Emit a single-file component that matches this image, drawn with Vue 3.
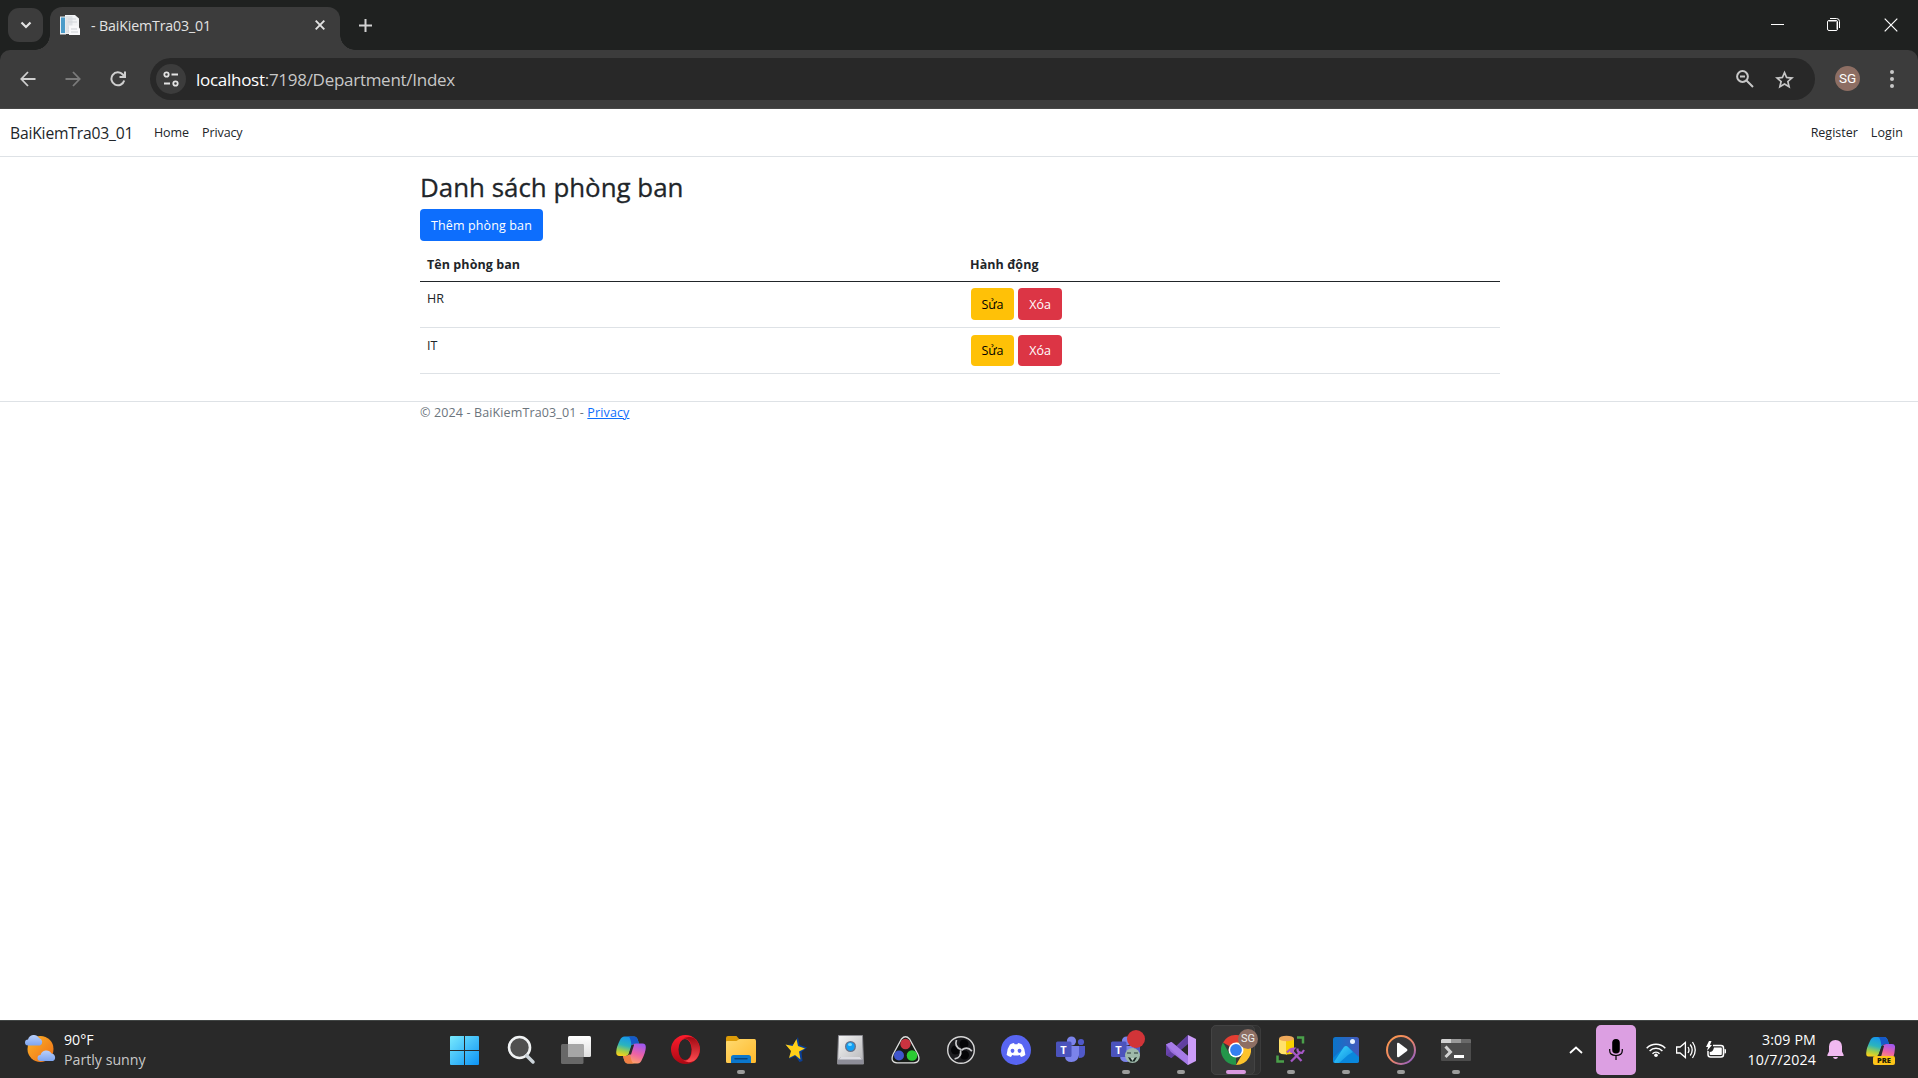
<script setup>
const departments = [
  { name: 'HR' },
  { name: 'IT' },
]
</script>

<template>
  <div class="screen">
    <!-- Browser tab strip -->
    <div class="tabstrip">
      <div class="tabsearch">
        <svg width="12" height="8" viewBox="0 0 12 8"><path d="M1.500 1.500 6 6l4.500-4.500" fill="none" stroke="#e3e3e3" stroke-width="2.200" /></svg>
      </div>
      <div class="tab">
        <svg class="favicon" width="20" height="20" viewBox="0 0 20 20">
          <path d="M0 1.500h6v18H0z" fill="#e9eef2" /><path d="M1 2.500h4v15.500H1z" fill="#4a9bc9" />
          <path d="M5 0h10l4 3.500V19H5z" fill="#f2f3f5" /><path d="M5.500 1h7v17h-7z" fill="#dfe2e6" />
          <path d="M8 4h8M8 7h9M8 13h8M8 16h8" stroke="#d3d6db" />
          <path d="M9 10.500h8l3 3V20H9z" fill="#f8f8fa" /><path d="M11 14h6M11 17h7" stroke="#cdd0d5" />
        </svg>
        <span class="tabtitle">- BaiKiemTra03_01</span>
        <svg class="tabclose" width="10" height="10" viewBox="0 0 10 10"><path d="m.7.7 8.600 8.600M9.300.7.7 9.300" stroke="#e3e3e3" stroke-width="1.900" /></svg>
      </div>
      <svg class="newtab" width="13" height="13" viewBox="0 0 13 13"><path d="M6.500 0v13M0 6.500h13" stroke="#d2d2d2" stroke-width="2" /></svg>
      <div class="wincontrols">
        <svg width="13" height="13" viewBox="0 0 13 13"><path d="M0 6.500h13" stroke="#fff" /></svg>
        <svg width="13" height="13" viewBox="0 0 13 13"><path d="M3 .5h6.500a3 3 0 0 1 3 3V10" fill="none" stroke="#fff" /><rect x=".5" y="2.500" width="10" height="10" rx="1.500" fill="none" stroke="#fff" /><path d="M2 3.500h7.500V11" fill="none" stroke="#8b8b8b" /></svg>
        <svg width="14" height="14" viewBox="0 0 14 14"><path d="m.7.7 12.600 12.600M13.300.7.7 13.300" stroke="#fff" stroke-width="1.200" /></svg>
      </div>
    </div>

    <!-- Toolbar -->
    <div class="toolbar-back">
      <div class="toolbar">
        <svg class="navicon" width="16" height="16" viewBox="0 0 16 16"><path d="M15.500 8H2M8 1 1.300 8 8 15" fill="none" stroke="#cfcfcf" stroke-width="1.800" /></svg>
        <svg class="navicon" width="16" height="16" viewBox="0 0 16 16"><path d="M.5 8H14M8 1l6.700 7L8 15" fill="none" stroke="#7b7b7b" stroke-width="1.800" /></svg>
        <svg class="navicon reload" width="16" height="16" viewBox="0 0 16 16"><path d="M14.200 9.500A6.500 6.500 0 1 1 12.800 3.500L14.500 5.500" fill="none" stroke="#cfcfcf" stroke-width="2" /><path d="M15 .5v5.500H9.500" fill="none" stroke="#cfcfcf" stroke-width="2" /></svg>
        <div class="omnibox">
          <div class="sitechip">
            <svg width="16" height="16" viewBox="0 0 16 16" fill="none" stroke="#e3e3e3" stroke-width="1.800"><circle cx="3.500" cy="3.500" r="2.200" /><path d="M8.500 3.500H15M1 12.500h6" /><circle cx="12.500" cy="12.500" r="2.200" /></svg>
          </div>
          <span class="url"><span class="host">localhost</span>:7198/Department/Index</span>
          <svg class="zoomicon" width="18" height="18" viewBox="0 0 18 18" fill="none" stroke="#c7c7c7" stroke-width="2"><circle cx="6.500" cy="6.500" r="5.400" /><path d="M4 6.500h5M10.500 10.500l6.500 6.500" /></svg>
          <svg class="staricon" width="19" height="19" viewBox="0 0 24 24"><path fill="#c7c7c7" fill-rule="evenodd" d="M24 9.200l-8.600-.7L12 .5 8.600 8.500 0 9.200l6.500 5.700-2 8.600L12 18.900l7.400 4.600-2-8.600zM12 16.400l-4.200 2.500 1.100-4.800-3.700-3.200 4.900-.4L12 6l1.900 4.500 4.900.4-3.700 3.200 1.100 4.800z" /></svg>
        </div>
        <div class="avatar">SG</div>
        <svg class="dots" width="4" height="18" viewBox="0 0 4 18" fill="#c7c7c7"><circle cx="2" cy="2" r="2" /><circle cx="2" cy="9" r="2" /><circle cx="2" cy="16" r="2" /></svg>
      </div>
    </div>

    <!-- Web page -->
    <div class="page">
      <nav class="navbar">
        <a class="brand">BaiKiemTra03_01</a>
        <a class="link home">Home</a>
        <a class="link privacy">Privacy</a>
        <a class="link register">Register</a>
        <a class="link login">Login</a>
      </nav>
      <main class="container">
        <h1>Danh sách phòng ban</h1>
        <a class="btn primary">Thêm phòng ban</a>
        <div class="table">
          <div class="tr head"><div class="th name">Tên phòng ban</div><div class="th">Hành động</div></div>
          <div v-for="d in departments" :key="d.name" class="tr">
            <div class="td name">{{ d.name }}</div>
            <div class="td actions"><a class="btn warning">Sửa</a><a class="btn danger">Xóa</a></div>
          </div>
        </div>
      </main>
      <footer>
        <div class="container foot">© 2024 - BaiKiemTra03_01 - <a>Privacy</a></div>
      </footer>
    </div>

    <!-- Taskbar -->
    <div class="taskbar">
      <div class="weather">
        <svg width="31" height="29" viewBox="0 0 31 29">
          <defs>
            <linearGradient id="sun" x1="0" y1="0" x2="1" y2="1"><stop offset="0" stop-color="#fdb529" /><stop offset="1" stop-color="#ee6c15" /></linearGradient>
            <linearGradient id="cloud" x1="0" y1="0" x2="0" y2="1"><stop offset="0" stop-color="#b9cffa" /><stop offset="1" stop-color="#7ea5f0" /></linearGradient>
          </defs>
          <circle cx="15.500" cy="15" r="13" fill="url(#sun)" />
          <path d="M3 11.500a3 3 0 0 1 0-6 6 6 0 0 1 11-1.500 4 4 0 0 1 1 7.500z" fill="url(#cloud)" />
          <path d="M15.500 27a3 3 0 0 1 0-6 6 6 0 0 1 11-1.500 4 4 0 0 1 1.500 7.500z" fill="url(#cloud)" />
        </svg>
        <div class="weathertext"><div class="temp">90°F</div><div class="cond">Partly sunny</div></div>
      </div>

      <div class="apps">
        <div class="app first">
          <svg width="29" height="29" viewBox="0 0 29 29"><defs><linearGradient id="win" x1="0" y1="0" x2="1" y2="1"><stop offset="0" stop-color="#78eafd" /><stop offset="1" stop-color="#0c93f5" /></linearGradient></defs><path fill="url(#win)" d="M1 0h13v14H0V1a1 1 0 0 1 1-1zM15 0h13a1 1 0 0 1 1 1v13H15zM0 15h14v14H1a1 1 0 0 1-1-1zM15 15h14v13a1 1 0 0 1-1 1H15z" /></svg>
        </div>
        <div class="app">
          <svg width="30" height="30" viewBox="0 0 30 30"><circle cx="13.500" cy="12.500" r="10.500" fill="#505050" stroke="#f0f2f3" stroke-width="2.600" /><path d="m20.500 20.500 6.500 6.500" stroke="#ccd4da" stroke-width="3.500" stroke-linecap="round" /></svg>
        </div>
        <div class="app">
          <svg width="30" height="30" viewBox="0 0 30 30"><defs><linearGradient id="tv" x1="0" y1="0" x2="0" y2="1"><stop offset="0" stop-color="#fff" /><stop offset="1" stop-color="#dedede" /></linearGradient></defs><rect x="7" y="1" width="23" height="21" rx="1.500" fill="url(#tv)" /><rect x="0" y="9" width="22.500" height="20" rx="1.500" fill="#686868" /><rect x="7" y="9" width="15.500" height="13" fill="#a6a6a6" /></svg>
        </div>
        <div class="app">
          <svg width="30" height="28" viewBox="0 0 30 28"><defs>
            <linearGradient id="cp1" x1=".5" y1="0" x2=".2" y2="1"><stop offset="0" stop-color="#1594ee" /><stop offset=".45" stop-color="#2bb4bd" /><stop offset=".75" stop-color="#a5ce46" /><stop offset="1" stop-color="#ffd019" /></linearGradient>
            <linearGradient id="cp2" x1=".7" y1="0" x2=".3" y2="1"><stop offset="0" stop-color="#a058ef" /><stop offset=".5" stop-color="#ee62a4" /><stop offset="1" stop-color="#ffab60" /></linearGradient></defs>
            <path d="M8.500.5H18q3 0 4 4l1 3h-3.500q-3 0-4 3L12.700 18q-.9 2-3 2H3.500Q0 20 .2 16 .4 11 4 4 5.500.5 8.500.5z" fill="url(#cp1)" />
            <path d="M12 .5h6q3 0 4 4l1 3h-4q-2.500 0-3.500 2Q14.500.5 12 .5z" fill="#1659c8" />
            <path d="M21.500 27.500H12q-3 0-4-4L7 20h3q3 0 4-3l2.700-7.500q.9-2 3.300-2h6.500q3.500 0 3.300 4-.2 5-3.800 12-1.500 4-4.500 4z" fill="url(#cp2)" />
            <path d="M18 27.500h-6q-3 0-4-4L7 20h3q3 0 4-3 1 10 4 10.500z" fill="#f18044" /><path d="M12.500 18.500 15.500 9h2.500l-3 9.500z" fill="#272a2a" />
          </svg>
        </div>
        <div class="app">
          <svg width="29" height="29" viewBox="0 0 29 29"><defs><linearGradient id="op" x1="0" y1="0" x2="0" y2="1"><stop offset="0" stop-color="#ff1c2d" /><stop offset="1" stop-color="#aa0813" /></linearGradient><linearGradient id="op2" x1="0" y1="0" x2="0" y2="1"><stop offset="0" stop-color="#9f0711" /><stop offset="1" stop-color="#ff4d52" /></linearGradient></defs>
            <circle cx="14.500" cy="14.500" r="14.500" fill="url(#op)" /><path d="M10 5q6-5 13-2a14.500 14.500 0 0 1 0 23q-7 3-13-2 5 4 9-1.500 4-8 0-16-4-5-9-1.500z" fill="url(#op2)" /><ellipse cx="14" cy="14.500" rx="6.500" ry="10.500" fill="#292929" /></svg>
        </div>
        <div class="app">
          <svg width="30" height="27" viewBox="0 0 30 27"><defs><linearGradient id="fold" x1="0" y1="0" x2="1" y2="1"><stop offset="0" stop-color="#ffda70" /><stop offset="1" stop-color="#ffb92b" /></linearGradient></defs><path d="M0 2q0-2 2-2h8.500L14 4h14v6H0z" fill="#dc9b08" /><path d="M0 6q0-1 1-1h9.500l3-2H28.500Q30 3 30 5v20.500q0 1.500-1.500 1.500h-27Q0 27 0 25.500z" fill="url(#fold)" /><path d="M5 27v-5.500Q5 19 7.500 19h15q2.500 0 2.500 2.500V27z" fill="#0b77cc" /><path d="M9 22.800h12" stroke="#06447e" stroke-width="1.500" stroke-linecap="round" /></svg>
          <i class="mark"></i>
        </div>
        <div class="app">
          <svg width="22" height="26" viewBox="0 0 22 26"><path d="m13 0 1.500 8 7.500 2.500-5.500 4.500 1 9-3 1-4-6L4 22l3-8-6-6 8.500-1z" fill="#0b3f96" /><path d="m11.500 2 1.500 7 7 2.500-6 3 1.500 8L10 18l-6 3 2-7L.5 7.500l7 1.500z" fill="#ffcf18" /></svg>
        </div>
        <div class="app">
          <svg width="27" height="30" viewBox="0 0 27 30"><defs><linearGradient id="cam" x1="0" y1="0" x2="1" y2="1"><stop offset="0" stop-color="#f5f5f5" /><stop offset="1" stop-color="#b4b4b7" /></linearGradient></defs><path d="M1.500 .5h24l1 28.500H.5z" fill="url(#cam)" stroke="#8a8a90" /><path d="M1 29v-4l3-3h19l3 3v4z" fill="#8d8d98" /><path d="M2 24.500 4 22h19l2 2.500z" fill="#dcdce2" /><circle cx="13.500" cy="11.500" r="5.500" fill="#66728a" /><circle cx="13.500" cy="11.500" r="4.200" fill="#11a0f5" /><ellipse cx="13" cy="9.500" rx="2" ry="1.500" fill="#7fdcff" /></svg>
        </div>
        <div class="app">
          <svg width="29" height="28" viewBox="0 0 29 28"><path d="M10.500 3Q14.500-1.500 18.500 3L27 18.500Q30 26.300 23 26.800H6Q-1 26.300 2 18.500z" fill="#171b17" stroke="#dedede" stroke-width="1.300" /><circle cx="14.500" cy="8" r="5.200" fill="#ca3340" /><circle cx="8" cy="19.500" r="5" fill="#3f55cc" /><circle cx="21" cy="19.500" r="5.300" fill="#2bcb33" /></svg>
        </div>
        <div class="app">
          <svg width="28" height="28" viewBox="0 0 28 28"><circle cx="14" cy="14" r="13.300" fill="#1d1d20" stroke="#d7d7d7" stroke-width="1.400" /><g fill="#050507"><circle cx="17" cy="8" r="4.500" /><circle cx="8.500" cy="14" r="4.500" /><circle cx="17.500" cy="19" r="4.500" /></g><g fill="none" stroke="#c9c9cb" stroke-width="1.700"><path id="blade" d="M14 13.500Q7 11 9.500 4" /><path transform="rotate(120 14 14)" d="M14 13.500Q7 11 9.500 4" /><path transform="rotate(240 14 14)" d="M14 13.500Q7 11 9.500 4" /></g></svg>
        </div>
        <div class="app">
          <svg width="30" height="30" viewBox="0 0 30 30"><circle cx="15" cy="15" r="15" fill="#5865f2" /><path d="M9 9.500q2-1.200 4-1.400l.6 1.200h2.800l.6-1.200q2 .2 4 1.400 3.500 5 3.300 10.500-2 1.500-4.300 2l-1.200-2q-3.800 1.200-7.600 0l-1.200 2q-2.300-.5-4.300-2Q5.500 14.500 9 9.500z" fill="#fff" /><ellipse cx="11.500" cy="15.800" rx="1.900" ry="2.100" fill="#5865f2" /><ellipse cx="18.500" cy="15.800" rx="1.900" ry="2.100" fill="#5865f2" /></svg>
        </div>
        <div class="app" v-for="n in 2" :key="n">
          <svg width="30" height="27" viewBox="0 0 30 27"><circle cx="25" cy="6" r="3.100" fill="#5059c9" /><path d="M20 10h9v7q0 5-6 5z" fill="#5059c9" /><circle cx="15.500" cy="5" r="4.600" fill="#7b83eb" /><path d="M9 10h14v9q-1 7-7.500 7T9 20z" fill="#7b83eb" /><rect y="5.500" width="15.500" height="15.500" rx="1.500" fill="#4b53bc" /></svg>
          <span class="teamsT">T</span>
          <template v-if="n === 2">
            <svg class="face" width="15" height="15" viewBox="0 0 15 15"><circle cx="7.500" cy="7.500" r="7.500" fill="#9eb9aa" /><path d="M2 5h4M9 5h4" stroke="#53675f" stroke-width="1.500" /><path d="M3 9l2.500 4.500h4L12 9l-4.500 1.500z" fill="#172622" /><path d="m5.500 10 2 3 2-3z" fill="#c1d4c8" /></svg>
            <i class="reddot"></i><i class="mark"></i>
          </template>
        </div>
        <div class="app">
          <svg width="30" height="30" viewBox="0 0 30 30"><path d="M0 9.500 5.500 7v16L0 20z" fill="#6a43ad" /><path d="M5 22.500 22 5.500V0L9 12l-4 5z" fill="#6a43ad" /><path d="M0 20 14 10l8-10v9L5.500 23z" fill="#60409f" /><path d="M0 9.500 5.500 7 22 21v9L5 17z" fill="#9a6fdc" /><path d="M5.500 7 12 12.500 22 21v9L0 9.500z" fill="#a67be6" /><path d="m22 0 8 4v22l-8 4z" fill="#cb9cf8" /></svg><i class="mark"></i>
        </div>
        <div class="app">
          <div class="tile stack"></div><div class="tile"></div>
          <svg class="front" width="30" height="30" viewBox="0 0 30 30"><path d="M15 15 2 7.500a15 15 0 0 1 26 0z" fill="#e43e32" /><path d="M15 15v7.500L15 30A15 15 0 0 1 2 7.500l6.500 11.300z" fill="#24964a" /><path d="M21.500 18.700 15 30A15 15 0 0 0 28 7.500H15z" fill="#fdc32c" /><circle cx="15" cy="15" r="7.500" fill="#fff" /><circle cx="15" cy="15" r="5.900" fill="#347ff0" /></svg>
          <span class="sgbadge">SG</span><i class="mark active"></i>
        </div>
        <div class="app">
          <svg width="29" height="29" viewBox="0 0 29 29"><path d="M21 2.500h6v6M1.500 20.500v6H8" fill="none" stroke="#4aa04a" stroke-width="2.500" /><path d="M3 4v13q1 2.500 8 2.500V5z" fill="#ffe16c" /><path d="M10 5l8-1v13q-1 2.500-8 2.500z" fill="#f8d000" /><ellipse cx="10.500" cy="3.500" rx="7.500" ry="2.800" fill="#efa95a" /><g fill="none" stroke="#a657c7"><path d="m15 26.500 8.500-8.500M16 16l9.500 10" stroke-width="2.300" /><path d="M11 17.500q3-4 7-4l-3.500 4M21.500 13.500q-.5 4.500 4.500 4.500l2-3" stroke-width="2.200" /></g></svg><i class="mark"></i>
        </div>
        <div class="app">
          <svg width="26" height="26" viewBox="0 0 26 26"><defs><linearGradient id="ph" x1="0" y1="0" x2="1" y2="0"><stop offset="0" stop-color="#0a75ca" /><stop offset="1" stop-color="#445abc" /></linearGradient><linearGradient id="ph2" x1="0" y1="0" x2="1" y2="1"><stop offset="0" stop-color="#42dcff" /><stop offset="1" stop-color="#0988e1" /></linearGradient></defs><rect width="26" height="26" rx="2.500" fill="url(#ph)" /><path d="M0 21 11 10q2-2 4 0l11 10v3.500q0 2.500-2.500 2.500h-21Q0 26 0 23.500z" fill="#0987dc" /><path d="M1 25 11 10q2-2 4 0l5 5-5 3-9 8H2z" fill="url(#ph2)" /><circle cx="19.500" cy="4.500" r="2.500" fill="#e9f3ff" /></svg><i class="mark"></i>
        </div>
        <div class="app">
          <svg width="30" height="30" viewBox="0 0 30 30"><defs><linearGradient id="mp" x1="0" y1="0" x2="1" y2="1"><stop offset="0" stop-color="#ff9a48" /><stop offset=".55" stop-color="#e7836c" /><stop offset="1" stop-color="#8257d9" /></linearGradient></defs><circle cx="15" cy="15" r="14" fill="#363638" stroke="url(#mp)" stroke-width="2" /><path d="M11 9q0-2 2-1l8 6q1 1 0 2l-8 6q-2 1-2-1z" fill="#fff" /></svg><i class="mark"></i>
        </div>
        <div class="app">
          <svg width="30" height="22" viewBox="0 0 30 22"><rect width="30" height="22" rx="1" fill="#4c4c4c" /><path d="M1 0h9v4H0V1z" fill="#d1d1d1" /><path d="M10 0h10v4H10z" fill="#999" /><path d="M20 0h9l1 1v3H20z" fill="#696969" /><path d="m4.500 7.500 5 5.500-5 5" fill="none" stroke="#d1d1d1" stroke-width="3" /><path d="M13 17.500h10" stroke="#fff" stroke-width="3" /></svg><i class="mark"></i>
        </div>
      </div>

      <div class="tray">
        <svg width="14" height="8" viewBox="0 0 14 8"><path d="m1 7 6-5.500L13 7" fill="none" stroke="#fff" stroke-width="1.800" /></svg>
        <div class="mic"><svg width="14" height="21" viewBox="0 0 14 21"><rect x="3.200" width="7.600" height="14.500" rx="3.800" fill="#000" /><path d="M.7 10v1.500q0 5 6.300 5t6.300-5V10M7 16.500V21" fill="none" stroke="#000" stroke-width="1.200" /></svg></div>
        <svg class="wifi" width="20" height="15" viewBox="0 0 20 15" fill="none" stroke="#fff" stroke-width="1.500"><path d="M.7 6.200a13 13 0 0 1 18.600 0M3.600 9a9 9 0 0 1 12.800 0M6.500 11.700a5 5 0 0 1 7 0" /><circle cx="10" cy="13.200" r="1.800" fill="#fff" stroke="none" /></svg>
        <svg class="sound" width="20" height="18" viewBox="0 0 20 18" fill="none" stroke="#fff" stroke-width="1.300"><path d="M.6 6v6h3.500l5.300 4.500v-15L4.100 6zM12 6q2 3 0 6M14.200 3.500q4 5.500 0 11M16.500 1q5.500 8 0 16" /></svg>
        <svg class="battery" width="20" height="17" viewBox="0 0 20 17"><path d="M7 4.500h8q2.500 0 2.500 2.500v6.500q0 2.500-2.500 2.500H4.500Q2 16 2 13.500V10" fill="none" stroke="#fff" stroke-width="1.500" /><path d="M8 6.500h7q.8 0 .8.700v6q0 .8-.8.800H4.500q-.8 0-.8-.8V11q3.300 0 4.300-4.500z" fill="#fff" /><path d="M18.500 8h.5q1 0 1 1v2.500q0 1-1 1h-.5zM3 0 0 6h2L1 10l5-6H4l1.500-4z" fill="#fff" /></svg>
        <div class="clock"><div class="time">3:09 PM</div><div class="date">10/7/2024</div></div>
        <svg class="bell" width="17" height="20" viewBox="0 0 17 20" fill="#f0b9f0"><path d="M8.500 0Q14.700.3 15 6.500v5l1.700 3.500q.3 1-.7 1H1q-1 0-.7-1L2 11.500v-5Q2.300.3 8.500 0zM6 17h5q-.5 2-2.500 2T6 17z" /></svg>
        <div class="copre">
          <svg width="29" height="22" viewBox="0 0 29 22"><path d="M9 0h9q3 0 4 4l1 3h-3.500q-3 0-4 3l-3 7.500q-1 2-3 2H3Q0 20 .2 16 .4 11 4 4 5.500 0 9 0z" fill="url(#cp1)" /><path d="M12 0h6q3 0 4 4l1 3h-4q-2.500 0-3.500 2Q14.500.5 12 0z" fill="#1659c8" /><path d="M9 22l4-2 3.500-10q1-3 4-3H26q3.500 0 3 4-.2 5-2 11z" fill="url(#cp2)" /><path d="M12 20l3.500-11H18l-3 11z" fill="#272a2a" /></svg>
          <span class="pre">PRE</span>
        </div>
      </div>
    </div>
  </div>
</template>

<style>
html, body { margin: 0; overflow: hidden; }
</style>

<style scoped>
* { box-sizing: border-box; }
svg { display: block; flex: none; }
.screen { width: 1918px; height: 1078px; display: flex; flex-direction: column; background: #fff; font-family: "Open Sans", "Noto Sans", sans-serif; color: #212529; white-space: nowrap; overflow: hidden; }

.tabstrip { height: 50px; flex: none; background: #1f2120; display: flex; align-items: flex-start; padding-left: 8px; }
.tabsearch { width: 35px; height: 34px; margin-top: 8px; border-radius: 11px; background: #3c3c3c; display: flex; align-items: center; justify-content: center; }
.tab { position: relative; width: 290px; height: 43px; margin: 7px 0 0 7px; border-radius: 12px 12px 0 0; background: #3c3c3c; display: flex; align-items: center; padding: 0 15px 7px 10px; }
.tab::before, .tab::after { content: ""; position: absolute; bottom: 0; width: 15px; height: 15px; }
.tab::before { left: -15px; background: radial-gradient(circle at 0 0, transparent 14.500px, #3c3c3c 15px); }
.tab::after { right: -15px; background: radial-gradient(circle at 100% 0, transparent 14.500px, #3c3c3c 15px); }
.tabtitle { margin-left: 11px; padding-top: 1px; font-size: 14.200px; line-height: 20px; letter-spacing: -.14px; color: #e3e3e3; }
.tabclose { margin-left: auto; }
.newtab { margin: 19px 0 0 19px; }
.wincontrols { margin-left: auto; padding: 18px 20px 0 0; display: flex; gap: 43px; }
.wincontrols svg:last-child { margin-left: 1px; }

.toolbar-back { background: #1f2120; flex: none; }
.toolbar { height: 59px; background: #3c3c3c; border-radius: 10px 10px 0 0; display: flex; align-items: center; padding-left: 20px; border-bottom: 1px solid #474747; }
.navicon + .navicon { margin-left: 29px; }
.omnibox { width: 1665px; height: 42px; margin-left: 24px; border-radius: 21px; background: #282828; display: flex; align-items: center; padding-left: 6px; }
.sitechip { width: 30px; height: 30px; border-radius: 50%; background: #3c3c3c; display: flex; align-items: center; justify-content: center; }
.url { margin-left: 10px; padding-top: 2px; font-size: 17px; line-height: 24px; letter-spacing: -.28px; color: #c7c7c7; }
.host { color: #fff; }
.zoomicon { margin-left: auto; }
.staricon { margin: 0 21px 0 21px; }
.avatar { width: 25px; height: 25px; margin: 0 0 1px 20px; border-radius: 50%; background: #8d6e63; color: #fff; font: 13.500px/25px Roboto, sans-serif; text-align: center; }
.dots { margin-left: 30px; }

.page { flex: 1; min-height: 0; }
.navbar { height: 48px; border-bottom: 1px solid #dee2e6; display: flex; align-items: center; padding: 0 15px 1px 10px; }
.brand { width: 122px; padding-top: 1px; font-size: 15.700px; letter-spacing: -.2px; }
.link { font-size: 12.500px; letter-spacing: -.1px; }
.home { margin-left: 22px; width: 48px; }
.register { margin-left: auto; margin-right: 13px; letter-spacing: 0; }
.login { letter-spacing: .1px; }
.container { width: 1080px; margin: 0 auto; padding-left: 1px; }
h1 { margin: 0; padding-top: 13px; height: 52px; font-size: 25.900px; line-height: 34px; font-weight: 500; -webkit-text-stroke: .3px #212529; }
.btn { display: flex; align-items: center; justify-content: center; height: 32px; padding-top: 1px; border-radius: 4px; font-size: 12.500px; line-height: 20px; }
.primary { width: 123px; background: #0d6efd; color: #fff; letter-spacing: .13px; }
.table { width: 1080px; }
.tr { display: flex; height: 46px; border-bottom: 1px solid #dee2e6; }
.head { height: 41px; border-bottom-color: #212529; }
.th { font-weight: 700; font-size: 12.500px; line-height: 18px; padding-top: 15px; letter-spacing: .07px; }
.name { width: 544px; padding-left: 7px; }
.th:last-child { padding-left: 6px; }
.td { font-size: 12.500px; line-height: 18px; padding-top: 8px; }
.tr:last-child .name { padding-top: 9px; }
.td.actions { display: flex; gap: 4px; padding: 6px 0 0 7px; }
.tr:last-child .actions { padding-top: 7px; }
.tr:last-child .btn { height: 31px; }
.actions .btn { width: 43px; }
.warning { background: #ffc107; color: #000; }
.danger.btn { width: 44px; background: #dc3545; color: #fff; }
footer { margin-top: 27px; border-top: 1px solid #dee2e6; }
.foot { font-size: 12.500px; line-height: 21px; letter-spacing: .13px; color: #6c757d; }
.foot a { color: #0d6efd; text-decoration: underline; }

.taskbar { height: 58px; flex: none; border-top: 1px solid #414544; background: #292929; color: #fff; display: flex; }
.weather { width: 437px; display: flex; padding: 13px 0 0 25px; }
.weathertext { margin: -4px 0 0 8px; font-size: 14.200px; line-height: 20px; }
.cond { color: #c8c8c8; }
.apps { display: flex; }
.app { position: relative; width: 55px; height: 57px; display: flex; align-items: center; justify-content: center; }
.app.first { margin-right: 1px; padding-top: 2px; }
.mark { position: absolute; left: 24px; top: 49px; width: 8px; height: 4px; border-radius: 2px; background: #9b9b9b; }
.mark.active { left: 18px; width: 20px; background: #d999e0; }
.teamsT { position: absolute; left: 13px; top: 20px; width: 15px; font: 700 11px/18px "Open Sans", sans-serif; text-align: center; }
.face { position: absolute; left: 27px; top: 27px; }
.reddot { position: absolute; left: 29px; top: 9px; width: 18px; height: 18px; border-radius: 50%; background: #d13438; }
.tile { position: absolute; left: 3px; top: 4px; width: 44px; height: 50px; border: 1px solid #434343; border-radius: 5px; background: #383838; }
.tile.stack { width: 50px; background: #303030; border-color: #3b3b3b; }
.front { position: relative; }
.sgbadge { position: absolute; left: 30px; top: 8px; width: 20px; height: 20px; border-radius: 50%; background: #8d6e63; color: #eee; font: 11px/20px Roboto, sans-serif; text-align: center; }

.tray { flex: 1; display: flex; align-items: center; padding-left: 86px; }
.mic { width: 40px; height: 50px; margin-left: 13px; border-radius: 5px; background: #dc9fe2; display: flex; align-items: center; justify-content: center; }
.wifi { margin-left: 10px; }
.sound { margin-left: 10px; }
.battery { margin-left: 10px; }
.clock { width: 90px; text-align: right; font-size: 14.200px; line-height: 20px; letter-spacing: .15px; }
.bell { margin-left: 11px; }
.copre { position: relative; width: 29px; height: 28px; margin: 3px 0 0 22px; }
.pre { position: absolute; left: 7px; top: 19px; width: 22px; height: 9px; border-radius: 2px; background: #fcc419; color: #221b05; font: 800 7.500px/9px "Open Sans", sans-serif; text-align: center; }
</style>
